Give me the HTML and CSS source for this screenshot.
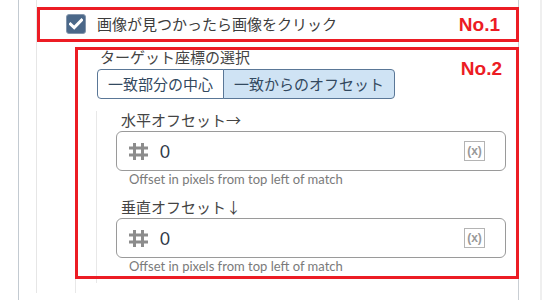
FILE: index.html
```html
<!DOCTYPE html>
<html lang="ja">
<head>
<meta charset="utf-8">
<title>Target settings</title>
<link rel="stylesheet" href="styles.css">
</head>
<body>
<div class="page">
  <div class="frame">
    <div class="panel">
      <div class="check-row">
        <span class="checkbox">
          <svg width="14" height="12" viewBox="0 0 14 12"><path d="M1.5 6.2 L5.2 9.6 L12.5 2.2" fill="none" stroke="#fff" stroke-width="3" stroke-linecap="square"/></svg>
        </span>
        <span class="check-label">画像が見つかったら画像をクリック</span>
      </div>
      <div class="group">
        <div class="group-label">ターゲット座標の選択</div>
        <div class="seg">
          <span class="seg-btn">一致部分の中心</span>
          <span class="seg-btn active">一致からのオフセット</span>
        </div>
        <div class="sub">
          <div class="field">
            <div class="field-label">水平オフセット→</div>
            <div class="input">
              <svg class="hash" width="19" height="17" viewBox="0 0 19 17"><path d="M5.5 0V17M13.5 0V17M0 5H19M0 12H19" stroke="#8c8c8c" stroke-width="3"/></svg>
              <span class="value">0</span>
              <span class="var">(x)</span>
            </div>
            <div class="help">Offset in pixels from top left of match</div>
          </div>
          <div class="field second">
            <div class="field-label">垂直オフセット↓</div>
            <div class="input">
              <svg class="hash" width="19" height="17" viewBox="0 0 19 17"><path d="M5.5 0V17M13.5 0V17M0 5H19M0 12H19" stroke="#8c8c8c" stroke-width="3"/></svg>
              <span class="value">0</span>
              <span class="var">(x)</span>
            </div>
            <div class="help">Offset in pixels from top left of match</div>
          </div>
        </div>
      </div>
    </div>
    <div class="anno anno1"><span class="anno-tag">No.1</span></div>
    <div class="anno anno2"><span class="anno-tag">No.2</span></div>
  </div>
  <div class="scroll"></div>
</div>
</body>
</html>
```
FILE: styles.css
```css
* { box-sizing: border-box; }
html, body { margin: 0; padding: 0; background: #fff; }
body {
  font-family: "Noto Sans CJK JP", "Lato", sans-serif;
  color: #3a3a3a;
  width: 560px;
  height: 300px;
  overflow: hidden;
}
.page {
  display: flex;
  height: 300px;
}
.frame {
  position: relative;
  margin-left: 18px;
  width: 501px;
  height: 300px;
  border-left: 1px solid #c3cad1;
  border-right: 1px solid #c9ced3;
}
.scroll {
  margin-left: 21px;
  width: 2px;
  height: 300px;
  background: #efefef;
}
.panel {
  margin-left: 17px;
  border-left: 1px solid #e6e6e6;
}
.check-row {
  display: flex;
  align-items: center;
  padding: 14px 0 0 29px;
  height: 34px;
}
.checkbox {
  width: 20px;
  height: 20px;
  border-radius: 3px;
  background: #4b6889;
  border: 1px solid #8496ad;
  display: flex;
  align-items: center;
  justify-content: center;
}
.check-label {
  margin-left: 11px;
  font-size: 15px;
  line-height: 20px;
  color: #3c3c3c;
}
.group {
  margin: 13px 0 0 38px;
  border-left: 1px solid #e8e8e8;
  padding: 0 0 10px 20px;
}
.group-label {
  font-size: 15px;
  line-height: 20px;
  padding-left: 4px;
  color: #444;
}
.seg {
  display: flex;
  margin: 2px 0 0 1px;
}
.seg-btn {
  font-size: 15px;
  line-height: 20px;
  padding: 4px 10px;
  border: 1px solid #5a7797;
  color: #33495f;
  background: #fff;
}
.seg-btn:first-child {
  border-radius: 4px 0 0 4px;
}
.seg-btn.active {
  margin-left: -1px;
  background: #cfe3f4;
  border-radius: 0 4px 4px 0;
}
.sub {
  margin-top: 12px;
  border-left: 1px solid #e8e8e8;
  padding: 0 12px 9px 19px;
}
.field.second {
  margin-top: 11px;
}
.field-label {
  font-size: 15px;
  line-height: 18px;
  padding-left: 5px;
  color: #444;
}
.input {
  margin-top: 2px;
  height: 40px;
  border: 1px solid #9a9a9a;
  border-radius: 6px;
  display: flex;
  align-items: center;
  padding: 0 20px 0 12px;
}
.hash { flex: none; }
.value {
  margin-left: 12px;
  font-family: "Lato", sans-serif;
  font-size: 17px;
  color: #2f3a48;
  flex: 1;
}
.var {
  width: 21px;
  height: 20px;
  border: 1px solid #b4b4b4;
  font-family: "Liberation Sans", sans-serif;
  font-weight: bold;
  font-size: 12px;
  line-height: 18px;
  text-align: center;
  color: #999;
}
.help {
  font-family: "Lato", sans-serif;
  font-size: 13px;
  line-height: 16px;
  padding-left: 13px;
  color: #7a7a7a;
}
.anno {
  position: absolute;
  border: 3px solid #ec1c24;
  display: flex;
  justify-content: flex-end;
}
.anno1 {
  left: 18px;
  top: 7px;
  width: 482px;
  height: 35px;
  align-items: center;
  padding-right: 16px;
}
.anno2 {
  left: 56px;
  top: 47px;
  width: 444px;
  height: 232px;
  align-items: flex-start;
  padding: 10px 14px 0 0;
}
.anno-tag {
  font-family: "Liberation Sans", sans-serif;
  font-weight: bold;
  font-size: 19px;
  line-height: 18px;
  color: #ec1c24;
}
```
